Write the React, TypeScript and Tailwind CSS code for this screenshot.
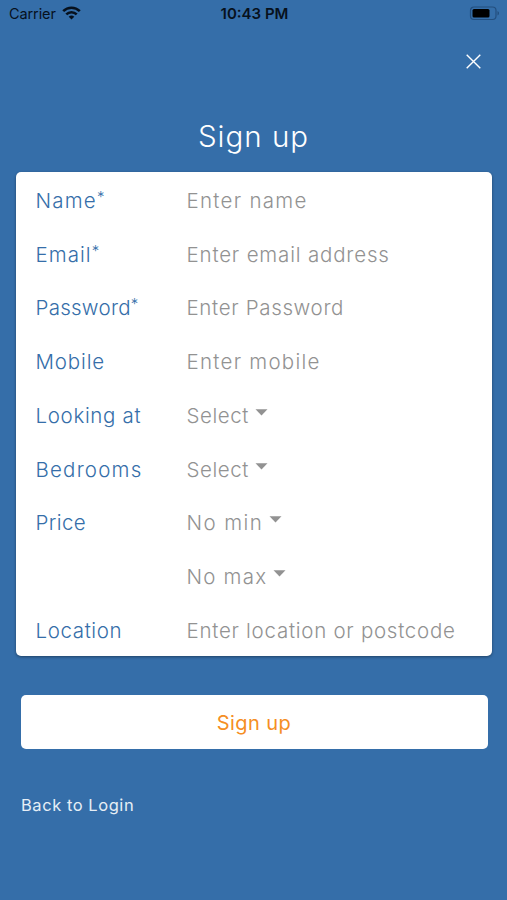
import clsx from "clsx";

type Field = {
  label: string;
  value: string;
  labelClass?: string;
  valueClass: string;
  required?: boolean;
  select?: boolean;
};

const FIELDS: Field[] = [
  { label: "Name", value: "Enter name", labelClass: "tracking-[1.2px]", valueClass: "tracking-[1.28px]", required: true },
  { label: "Email", value: "Enter email address", labelClass: "tracking-[1.05px]", valueClass: "tracking-[0.82px]", required: true },
  { label: "Password", value: "Enter Password", labelClass: "tracking-[0.27px]", valueClass: "tracking-[0.66px]", required: true },
  { label: "Mobile", value: "Enter mobile", labelClass: "tracking-[0.85px]", valueClass: "tracking-[1.26px]" },
  { label: "Looking at", value: "Select", labelClass: "tracking-[0.67px]", valueClass: "tracking-[0.55px]", select: true },
  { label: "Bedrooms", value: "Select", labelClass: "tracking-[1.2px]", valueClass: "tracking-[0.55px]", select: true },
  { label: "Price", value: "No min", labelClass: "tracking-[0.4px]", valueClass: "tracking-[1.4px]", select: true },
  { label: "", value: "No max", valueClass: "tracking-[1.2px]", select: true },
  { label: "Location", value: "Enter location or postcode", labelClass: "tracking-[0.62px]", valueClass: "tracking-[0.73px]" },
];

function StatusBar() {
  return (
    <div className="grid h-7 grid-cols-3 items-center pl-[9px] pr-[7px] text-[#07111d]">
      <div className="flex items-center gap-[6px]">
        <span className="text-[14.5px] leading-none tracking-[-0.1px]">Carrier</span>
        <svg className="mb-[2px]" width="19" height="14" viewBox="0 0 19 14" fill="none" stroke="currentColor" strokeWidth="2.6">
          <path d="M1.2 5.2a11.8 11.8 0 0 1 16.6 0" />
          <path d="M4.3 8.4a7.4 7.4 0 0 1 10.4 0" />
          <path d="M9.5 13.6 6.7 10.8a4 4 0 0 1 5.6 0z" fill="currentColor" stroke="none" />
        </svg>
      </div>
      <span className="mb-[2px] text-center text-[15px] leading-none font-semibold whitespace-nowrap">10:43 PM</span>
      <svg className="mb-px justify-self-end" width="31" height="15" viewBox="0 0 31 15" fill="none">
        <rect x="1.5" y="1" width="25.5" height="12.5" rx="3.5" stroke="#234f7f" strokeWidth="1.2" />
        <rect x="3.5" y="3" width="17" height="8.5" rx="1.5" fill="#000" />
        <path d="M28.5 5v4.5c2-.8 2-3.7 0-4.5z" fill="#234f7f" />
      </svg>
    </div>
  );
}

export default function App() {
  return (
    <main className="flex h-[900px] w-full flex-col overflow-hidden bg-[#356ea9] font-['Inter',sans-serif]">
      <StatusBar />

      <button aria-label="Close" className="mt-[26px] mr-[26px] self-end text-white">
        <svg width="15" height="15" viewBox="0 0 15 15" stroke="currentColor" strokeWidth="1.4">
          <path d="M.7.7l13.6 13.6M14.3.7.7 14.3" />
        </svg>
      </button>

      <h1 className="mt-[47px] text-center text-[29.5px] leading-[40px] font-light tracking-[1px] text-white">
        <span>Sign up</span>
      </h1>

      <form className="mt-4 mr-[15px] ml-[15.5px] h-[483.5px] shrink-0 rounded-[5px] bg-white pl-5 shadow-[0_1px_3px_rgba(0,0,0,0.4)]">
        {FIELDS.map((field) => (
          <div key={field.value + field.label} className="flex h-[53.75px] items-center pt-[4.5px] text-[20.5px] whitespace-nowrap">
            <label className="flex w-[151px] text-[#356ea9]">
              <span className={clsx("font-light", field.labelClass)}>{field.label}</span>
              {field.required && <span className="-mt-px text-[15px] leading-6 font-light">*</span>}
            </label>
            <span className={clsx("font-light text-[#929292]", field.valueClass)}>{field.value}</span>
            {field.select && (
              <svg className="mb-[7.5px] ml-[6px]" width="13" height="7" viewBox="0 0 13 7" fill="#929292">
                <path d="M.5.3h12l-6 6.2z" />
              </svg>
            )}
          </div>
        ))}
      </form>

      <button className="mr-[19.5px] ml-[20.5px] mt-[39.5px] h-[54px] shrink-0 rounded-[5px] bg-white pt-[2px] text-[20px] tracking-[0.4px] text-[#f58e23]">
        <span>Sign up</span>
      </button>

      <a className="mt-[44px] ml-[21px] self-start text-[16.5px] leading-6 tracking-[0.55px] text-[#e6eef6]">Back to Login</a>
    </main>
  );
}
